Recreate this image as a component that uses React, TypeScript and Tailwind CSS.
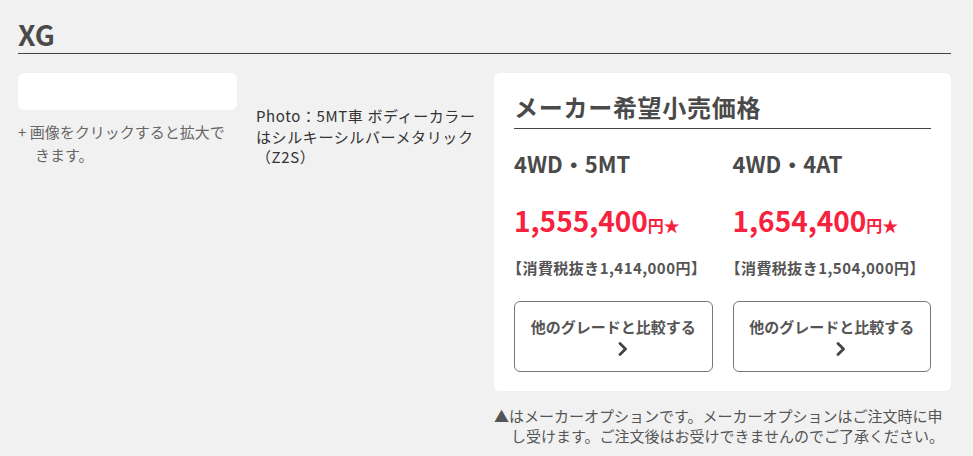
import React from 'react';

const font = { fontFamily: '"Noto Sans CJK JP", "Noto Sans", sans-serif' };

interface Grade {
  name: string;
  price: string;
  taxFree: string;
}

const GRADES: Grade[] = [
  { name: '4WD・5MT', price: '1,555,400', taxFree: '【消費税抜き1,414,000円】' },
  { name: '4WD・4AT', price: '1,654,400', taxFree: '【消費税抜き1,504,000円】' },
];

function Chevron() {
  return (
    <svg width="10" height="14" viewBox="0 0 10 14" className="mt-[4px] ml-[19px]">
      <polyline
        points="2,1.5 7.5,7 2,12.5"
        fill="none"
        stroke="#444"
        strokeWidth="2.8"
        strokeLinecap="round"
        strokeLinejoin="round"
      />
    </svg>
  );
}

function GradeColumn({ grade }: { grade: Grade }) {
  return (
    <div className="flex flex-col">
      <h3 className="mt-[19px] text-[22px] leading-[30px] font-bold text-[#4a4a4a]">{grade.name}</h3>
      <p className="mt-[22px] leading-[40px] font-bold text-[#f7223e]">
        <span className="text-[28px]">{grade.price}</span>
        <span className="text-[16px]">円★</span>
      </p>
      <p className="mt-[13px] text-[15px] leading-[20px] tracking-[0.03em] font-bold text-[#555] -ml-[7px]">
        {grade.taxFree}
      </p>
      <button className="mt-[23px] h-[71px] w-full rounded-[6px] border border-[#777] bg-white flex flex-col items-center pt-[14px]">
        <span className="text-[15px] leading-[22px] font-bold text-[#555]">他のグレードと比較する</span>
        <Chevron />
      </button>
    </div>
  );
}

export default function App() {
  return (
    <div className="min-h-[456px] w-full bg-[#f1f1f1] px-[18px] pt-[15px] text-[#333]" style={font}>
      <h1 className="text-[28px] leading-[38px] font-bold text-[#4a4a4a] pb-[0px] border-b border-[#444] w-[933px]">XG</h1>

      <div className="mt-[19px] flex items-start w-[933px]">
        <div className="w-[219px] shrink-0">
          <div className="h-[37px] rounded-[6px] bg-white" />
          <p className="mt-[10px] text-[15px] leading-[23px] text-[#666] pl-[17px] indent-[-17px]">
            + 画像をクリックすると拡大できます。
          </p>
        </div>

        <div className="ml-[19px] w-[220px] shrink-0 pt-[33px]">
          <p className="text-[15px] leading-[20.5px] tracking-[0.04em] text-[#333]">
            Photo：5MT車 ボディーカラーはシルキーシルバーメタリック（Z2S）
          </p>
        </div>

        <div className="ml-[18px] flex-1">
          <section className="rounded-[6px] bg-white px-[20px] pt-[16px] pb-[19px]">
            <h2 className="text-[24px] leading-[36px] tracking-[0.03em] font-bold text-[#4a4a4a] pb-[3px] border-b border-[#444]">
              メーカー希望小売価格
            </h2>
            <div className="grid grid-cols-2 gap-x-[20px]">
              {GRADES.map((g) => (
                <GradeColumn key={g.name} grade={g} />
              ))}
            </div>
          </section>
          <p className="mt-[15px] text-[15px] leading-[20px] text-[#555] pl-[17px] indent-[-17px]">
            ▲はメーカーオプションです。メーカーオプションはご注文時に申し受けます。ご注文後はお受けできませんのでご了承ください。
          </p>
        </div>
      </div>
    </div>
  );
}
